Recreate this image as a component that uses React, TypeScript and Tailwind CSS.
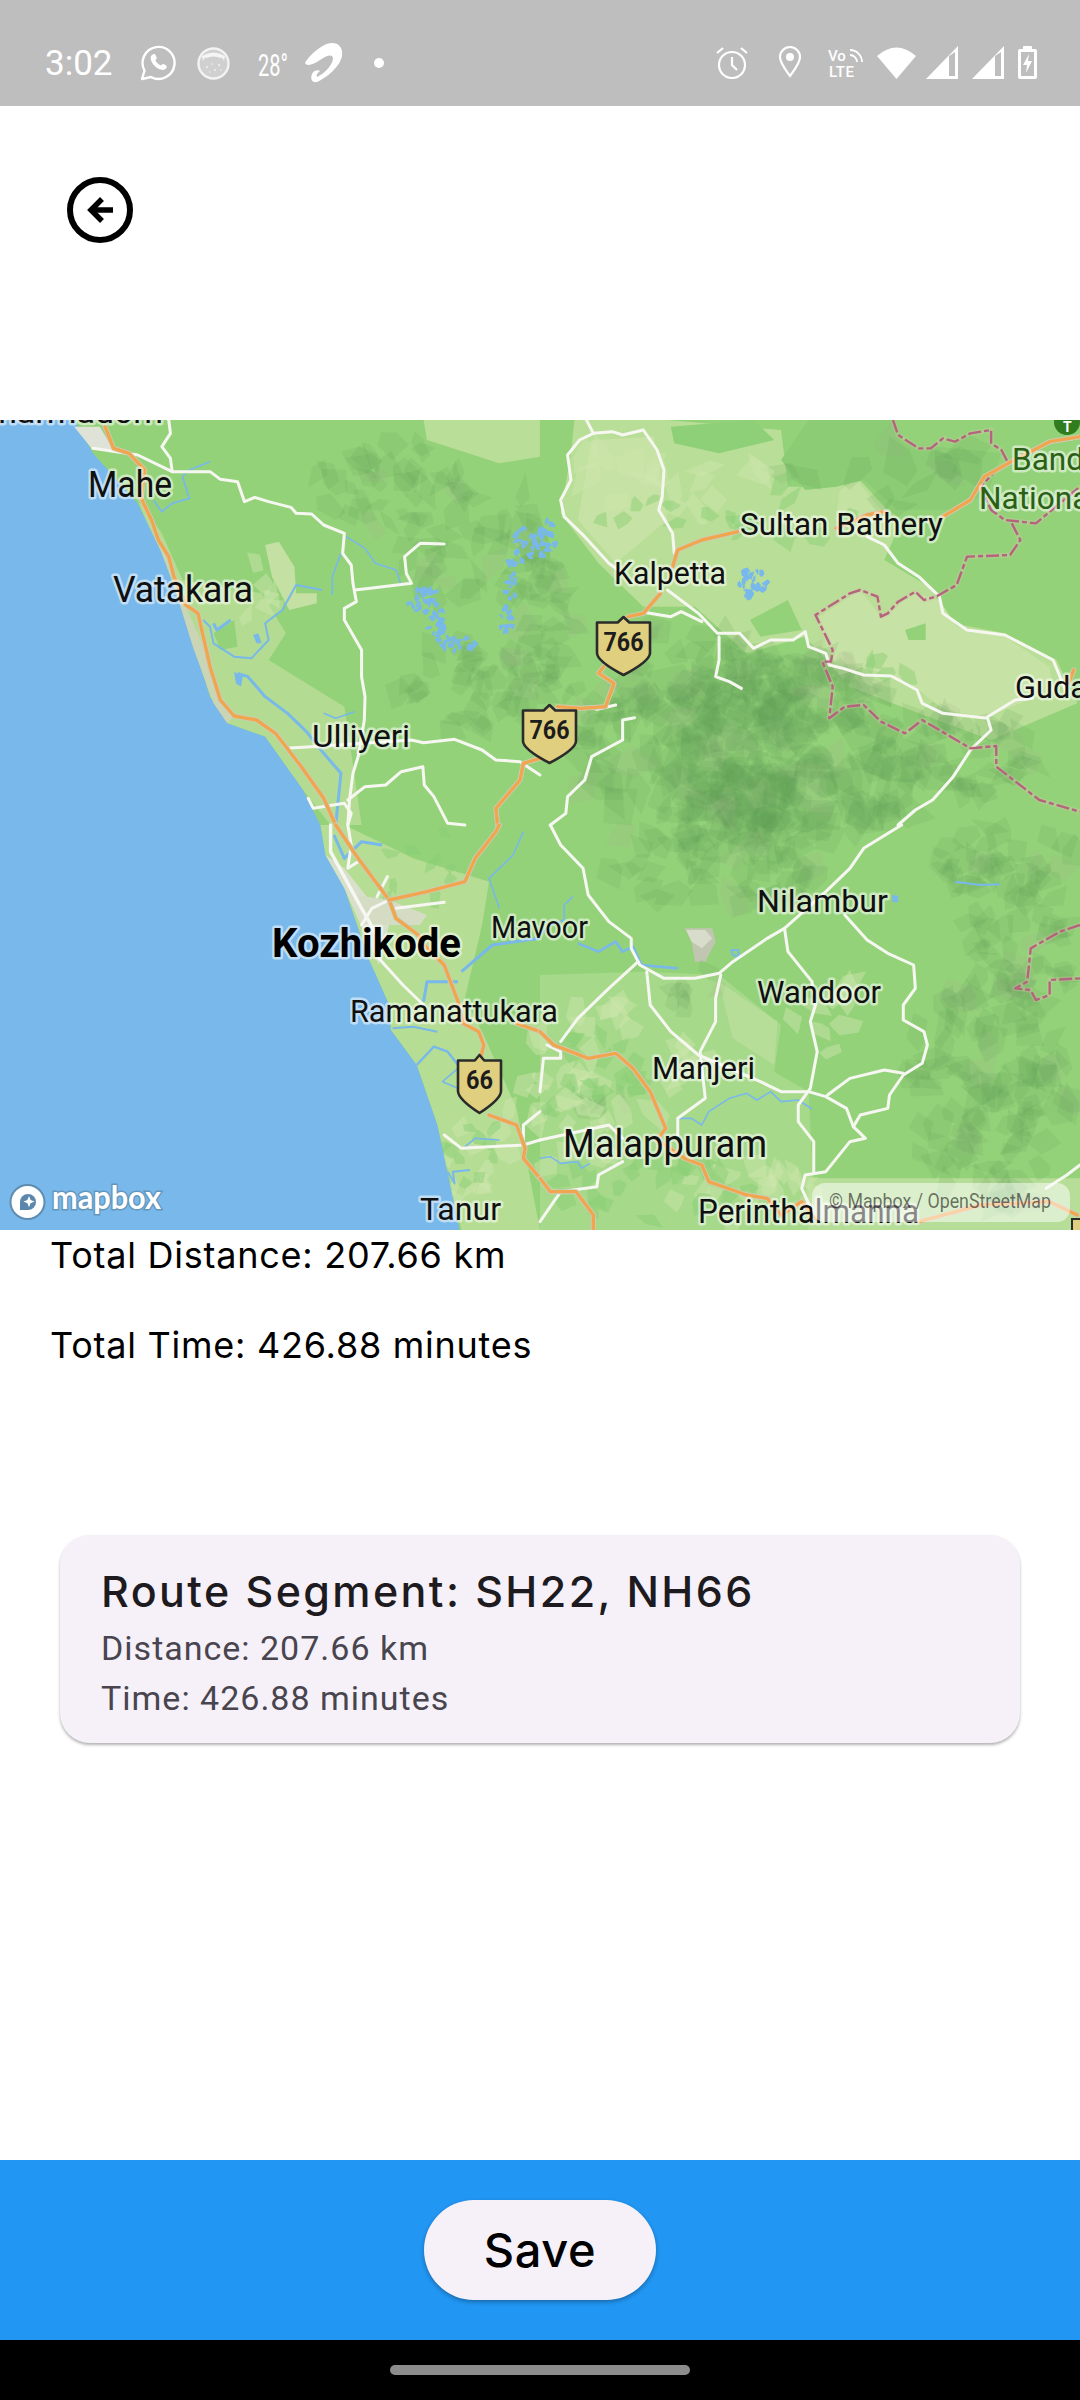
import React from "react";

const S = 1 / 2.904;
const T = 1 / 3;
const quad = (x: number, y: number) => `translate(${x} ${y}) scale(${S} ${T})`;

function scatter(seed: number, cx: number, cy: number, rx: number, ry: number, n: number, size: number) {
  let s = seed;
  const r = () => {
    s = (s * 16807) % 2147483647;
    return s / 2147483647;
  };
  const out: string[] = [];
  for (let i = 0; i < n; i++) {
    const a = r() * 6.283;
    const d = Math.sqrt(r());
    const x = cx + Math.cos(a) * d * rx;
    const y = cy + Math.sin(a) * d * ry;
    const p: string[] = [];
    const c = 4 + Math.floor(r() * 2);
    const tilt = r() * 6.283;
    const sq = 0.45 + r() * 0.45;
    for (let k = 0; k < c; k++) {
      const t = (k / c) * 6.283 + (r() - 0.5) * 0.7;
      const rad = (size / 2) * (0.6 + r() * 0.8);
      const ux = Math.cos(t) * rad;
      const uy = Math.sin(t) * rad * sq;
      p.push(`${(x + ux * Math.cos(tilt) - uy * Math.sin(tilt)).toFixed(1)},${(y + ux * Math.sin(tilt) + uy * Math.cos(tilt)).toFixed(1)}`);
    }
    out.push(p.join(" "));
  }
  return out;
}

const darkClusters: [number, number, number, number, number, number][] = [
  [396, 65, 80, 45, 34, 30],
  [470, 120, 70, 70, 40, 34],
  [465, 265, 70, 50, 38, 32],
  [540, 200, 40, 60, 30, 32],
  [575, 290, 50, 30, 18, 30],
  [753, 340, 190, 90, 170, 44],
  [753, 350, 90, 60, 60, 44],
  [690, 250, 80, 50, 44, 36],
  [800, 270, 90, 40, 44, 34],
  [955, 335, 90, 40, 44, 34],
  [715, 440, 110, 55, 60, 34],
  [988, 672, 85, 120, 100, 38],
  [1020, 520, 60, 60, 36, 34],
  [1005, 440, 70, 35, 34, 34],
  [884, 50, 110, 40, 14, 40],
  [690, 570, 40, 20, 8, 26],
  [600, 680, 30, 25, 8, 24],
];
const lightBlots: [number, number, number, number, number, number][] = [
  [620, 640, 90, 60, 24, 34],
  [560, 700, 70, 50, 20, 30],
  [760, 770, 90, 35, 22, 30],
  [460, 760, 30, 50, 12, 22],
  [820, 600, 40, 60, 10, 30],
  [660, 60, 110, 40, 16, 40],
  [250, 170, 25, 35, 6, 24],
];
const greenBlots: [number, number, number, number, number, number][] = [
  [640, 770, 110, 35, 22, 26],
  [590, 660, 60, 50, 18, 26],
  [470, 730, 30, 40, 10, 18],
  [420, 450, 40, 50, 10, 20],
  [800, 90, 70, 35, 8, 28],
  [640, 100, 50, 25, 6, 22],
  [880, 250, 40, 25, 4, 22],
  [720, 110, 25, 30, 4, 20],
];
const lakes: [number, number, number, number, number, number][] = [
  [424, 180, 16, 12, 26, 8],
  [440, 205, 12, 16, 24, 7],
  [458, 224, 18, 8, 20, 7],
  [506, 200, 6, 20, 16, 7],
  [512, 160, 7, 22, 16, 7],
  [525, 125, 12, 18, 18, 8],
  [545, 118, 12, 18, 22, 8],
  [753, 163, 14, 16, 28, 8],
];

function Road({ p, w = 3 }: { p: string; w?: number }) {
  return (
    <polyline points={p} fill="none" stroke="#f7f7f2" strokeWidth={w} strokeLinejoin="round" strokeLinecap="round" vectorEffect="non-scaling-stroke" />
  );
}
function Major({ p }: { p: string }) {
  return (
    <g fill="none" strokeLinejoin="round" strokeLinecap="round">
      <polyline points={p} stroke="#cfcdbb" strokeWidth={5} vectorEffect="non-scaling-stroke" />
      <polyline points={p} stroke="#f0a64e" strokeWidth={3.4} vectorEffect="non-scaling-stroke" />
    </g>
  );
}
function River({ p, w = 1.6 }: { p: string; w?: number }) {
  return <polyline points={p} fill="none" stroke="#78b8ea" strokeWidth={w} strokeLinejoin="round" vectorEffect="non-scaling-stroke" />;
}
function Border({ p }: { p: string }) {
  return (
    <g fill="none" strokeLinejoin="round">
      <polyline points={p} stroke="#d6c7a8" strokeOpacity={0.35} strokeWidth={5} vectorEffect="non-scaling-stroke" />
      <polyline points={p} stroke="#b5647e" strokeWidth={2.4} strokeDasharray="13 3 5 3" vectorEffect="non-scaling-stroke" />
    </g>
  );
}
function Label({ x, w, y, size, children, color = "#101010", bold = false }: { x: number; w: number; y: number; size: number; children: string; color?: string; bold?: boolean }) {
  return (
    <text
      x={x}
      y={y}
      textLength={w}
      lengthAdjust="spacingAndGlyphs"
      fontSize={size}
      fontWeight={bold ? 700 : 400}
      fill={color}
      stroke="#ffffff"
      strokeOpacity={0.55}
      strokeWidth={5}
      strokeLinejoin="round"
      paintOrder="stroke"
      fontFamily="Roboto, sans-serif"
    >
      {children}
    </text>
  );
}
function Shield({ x, y, w, h, t, tw }: { x: number; y: number; w: number; h: number; t: string; tw: number }) {
  const cx = x + w / 2;
  return (
    <g>
      <path
        d={`M${x} ${y + 0.095 * h} H${cx - 0.11 * w} L${cx} ${y} L${cx + 0.11 * w} ${y + 0.095 * h} H${x + w} V${y + 0.62 * h} Q${x + w} ${y + 0.76 * h} ${cx} ${y + h} Q${x} ${y + 0.76 * h} ${x} ${y + 0.62 * h} Z`}
        fill="#e0cf7f"
        stroke="#2b2b2b"
        strokeWidth={2.6}
        strokeLinejoin="round"
      />
      <text x={cx - tw / 2} y={y + 0.58 * h} textLength={tw} lengthAdjust="spacingAndGlyphs" fontSize={26} fontWeight={700} fill="#1c1c1c" fontFamily="Roboto, sans-serif">
        {t}
      </text>
    </g>
  );
}

function MapView() {
  return (
    <div className="h-[810px] w-full overflow-hidden">
      <svg width={1080} height={810} viewBox="0 0 1080 810" className="block">
        <g className="blur-[0.5px]">
          <rect x={-5} y={-5} width={1090} height={820} fill="#94d27a" />
          {/* light land */}
          <g transform={quad(540, 0)}>
            <polygon fill="#b9de97" points="100,0 370,0 700,30 720,200 860,200 920,170 1000,260 1050,300 1000,420 1130,500 1200,610 1350,640 1500,720 1560,850 1310,960 1100,880 900,800 770,650 600,700 450,560 300,560 170,430 60,280 90,100" />
            <polygon fill="#c6e2a4" points="810,590 930,510 990,590 1090,520 1160,540 1210,620 1350,650 1480,740 1490,810 1300,890 1170,870 1090,800 1000,760 840,720" />
            <polygon fill="#c6e2a4" points="150,60 330,50 370,300 220,430 110,300" />
            <polygon fill="#c4e2a2" points="870,210 920,180 990,270 930,340 860,300" />
            <polygon fill="#94d27a" points="1060,630 1120,610 1120,660 1070,660" />
            <polygon fill="#94d27a" points="610,600 720,540 760,630 640,650" />
            <polygon fill="#8ed077" points="380,20 620,0 680,60 520,100 390,70" />
            <polygon fill="#8ccc75" points="780,0 1030,0 1060,70 1340,100 1300,220 1200,270 1040,270 940,180 860,200 770,210 700,120" />
          </g>
          <g transform={quad(0, 0)}>
            <polygon fill="#b9de97" points="1230,0 1568,0 1568,110 1450,130 1240,60" />
            <polygon fill="#b3dc92" points="400,240 470,340 530,480 760,520 830,640 780,720 1000,860 1020,1000 1050,1215 960,1215 880,1110 770,950 660,910 610,830 530,570" />
            <polygon fill="#94d27a" points="620,640 680,600 690,680 640,690" />
            <polygon fill="#c4e0a2" points="770,375 810,365 855,440 860,520 920,520 920,550 840,570 790,470" />
          </g>
          <g transform={quad(0, 405)}>
            <polygon fill="#b5dd94" points="930,0 1000,0 1200,100 1420,170 1400,300 1350,520 1400,620 1500,850 1568,1215 1340,1215 1270,900 1210,720 1135,615 1130,540 1070,400 1000,190 945,90" />
          </g>
          <g transform={quad(540, 405)}>
            <polygon fill="#a7d98b" points="0,450 300,440 520,450 700,600 680,740 780,800 800,1215 0,1215" />
            <polygon fill="#b7de98" points="520,470 690,590 680,720 560,640" />
            <polygon fill="#b7de98" points="780,1060 1568,1060 1568,1215 780,1215" />
            <polygon fill="#c0c6b0" points="420,310 500,310 510,350 480,410 450,410 440,350" />
            <polygon fill="#d7dccb" points="425,315 480,315 500,340 470,370 440,350" />
          </g>
          {darkClusters.map((c, i) =>
            scatter(1000 + i * 77, c[0], c[1], c[2], c[3], c[4], c[5]).map((p, k) => (
              <polygon key={`${i}-${k}`} points={p} fill={k % 13 === 0 ? "#a6a98e" : "#5f9c55"} fillOpacity={0.14} />
            ))
          )}
          {lightBlots.map((c, i) =>
            scatter(3000 + i * 51, c[0], c[1], c[2], c[3], c[4], c[5]).map((p, k) => <polygon key={`l${i}-${k}`} points={p} fill="#cfe6ad" fillOpacity={0.45} />)
          )}
          {greenBlots.map((c, i) =>
            scatter(5000 + i * 91, c[0], c[1], c[2], c[3], c[4], c[5]).map((p, k) => <polygon key={`g${i}-${k}`} points={p} fill="#88cf74" fillOpacity={0.45} />)
          )}

          {/* sea */}
          <g transform={quad(0, 0)}>
            <polygon fill="#78b8ea" points="-20,-20 205,-20 270,100 400,250 470,400 530,570 610,830 660,910 770,950 880,1110 930,1215 -20,1215" />
            <polygon fill="#c9d5b4" points="400,250 440,320 500,480 560,680 620,850 660,910 680,890 640,840 600,700 540,560 490,420 450,340" />
            <polygon fill="#dfe2d6" points="215,20 290,20 330,90 270,90" />
          </g>
          <g transform={quad(0, 405)}>
            <polygon fill="#78b8ea" points="-20,0 930,0 945,90 1000,190 1030,280 1070,400 1130,540 1135,615 1210,720 1270,900 1340,1240 -20,1240" />
            <polygon fill="#d8dfcb" points="945,90 1000,130 1130,300 1100,420 1060,330 1000,190" />
            <polygon fill="#d4dcc4" points="1035,210 1130,225 1240,270 1220,300 1150,300 1080,300" />
          </g>

          {/* water */}
          {lakes.map((c, i) =>
            scatter(7000 + i * 33, c[0], c[1], c[2], c[3], c[4], c[5]).map((p, k) => <polygon key={`w${i}-${k}`} points={p} fill="#78b8ea" />)
          )}
          <g transform={quad(0, 0)}>
            <River p="1005,350 1060,385 1090,430 1150,450 1165,495" />
            <River p="990,400 965,470 965,525" />
            <River p="935,510 860,495 820,570 770,610 780,660 730,715 680,710 620,670 610,620 590,600" w={2} />
            <River p="530,170 550,235 500,250 470,275 445,240" w={1.8} />
            <River p="610,125 550,150 530,170" />
            <River p="670,600 630,630 620,610" w={3} />
            <River p="690,760 720,770 770,830 835,880 890,935 940,1000 990,1060 975,1215" w={3} />
            <River p="940,880 975,895 1030,875" />
            <polygon fill="#78b8ea" points="735,645 750,640 760,670 745,670" />
            <polygon fill="#78b8ea" points="680,755 705,770 700,800 685,790" />
          </g>
          <g transform={quad(0, 405)}>
            <River p="970,30 1000,100 1050,50 1110,60" w={3} />
            <River p="1520,20 1490,90 1420,160 1450,250" />
            <River p="1568,340 1430,360 1340,440" w={3} />
            <River p="1330,470 1240,470 1230,530" w={3} />
            <River p="1140,610 1200,605 1270,620" w={2} />
            <River p="1210,720 1260,665 1300,680 1330,720" w={2.4} />
            <River p="1330,730 1285,770 1330,790" />
            <River p="1345,970 1380,940 1450,945" />
            <River p="1300,1040 1320,1075 1315,1040 1365,1035" w={2} />
          </g>
          <g transform={quad(540, 405)}>
            <River p="95,215 70,240 70,285 30,300 0,330" />
            <River p="110,355 170,380 220,350 240,380 270,365 295,420 400,430" w={2.6} />
            <River p="405,880 440,880 470,900 490,860 550,820 600,805 630,825 670,800 700,830 750,825 790,852" />
            <River p="555,375 575,375 578,395 560,390 555,375" w={2} />
            <River p="1205,170 1280,180 1335,178" w={2} />
            <polygon fill="#78b8ea" points="1022,210 1040,212 1040,232 1024,232" />
            <River p="0,1000 30,995 60,1015 110,1010 120,1030 145,1015" />
          </g>

          {/* roads */}
          <g transform={quad(0, 0)}>
            <Road p="270,85 400,105 500,155 610,155 640,178 690,185 710,245 740,232 780,245 845,262 860,280 905,282 940,315 1000,340 995,400 1020,435 1025,490 1035,545 1000,565 1000,600 1050,690 1050,770 1060,830 1058,900 1040,1010 1025,1060 1015,1140 1010,1215" />
            <Road p="490,0 495,40 470,80 495,115 500,155" />
            <Road p="1030,510 1075,505 1195,490 1180,460 1175,410 1220,370 1290,372" />
            <Road p="830,985 905,980 1195,960 1230,968 1320,958 1400,990 1440,1020 1510,1025 1568,1065" />
            <Road p="1010,1140 1060,1100 1120,1095 1165,1055 1228,1040 1232,1095 1260,1130 1300,1210 1350,1215" />
            <Road p="895,1135 910,1165 1000,1150 1020,1180 1010,1215" />
            <Major p="305,20 330,85 375,100 420,150 410,235 440,300 460,360 490,410 505,470 540,555 575,580 610,740 640,840 680,888 745,900 800,940 875,1040 940,1135 975,1215" />
            <Major p="1568,1015 1520,1030 1510,1080 1440,1165 1445,1215" />
          </g>
          <g transform={quad(540, 0)}>
            <Road p="135,0 155,40 115,60 80,105 90,180 60,240 70,290 130,350 200,430 240,460" />
            <Road p="155,40 210,35 240,45 300,30 340,90 360,150 355,230 345,270 385,340 390,400" />
            <Road p="370,510 460,580 515,640 580,640 620,685 670,660 735,660 770,635 780,680 830,700 840,735 880,745 940,765 1020,768 1095,810 1110,850 1170,880 1300,895 1310,930 1250,990 1200,1070 1140,1140 1090,1170 1040,1215" />
            <Road p="310,578 380,590 410,575 470,605" />
            <Road p="520,650 520,720 510,770 550,785 585,805" />
            <Road p="950,350 1000,375 1040,430 1100,470 1160,530 1170,580 1240,630 1350,645 1490,720 1530,820" />
            <Road p="1300,890 1380,840 1430,835" />
            <Road p="275,893 240,900 240,960 150,1010 130,1080 80,1130 75,1180 30,1215" />
            <Road p="165,868 220,855" />
            <Border p="1025,0 1040,45 1100,85 1135,85 1170,55 1205,65 1250,40 1310,30 1310,70 1340,90 1360,130 1320,155 1280,200 1310,270 1350,300 1440,310 1568,200" />
            <Border p="1370,310 1395,360 1365,405 1240,410 1210,495 1150,530 1115,540 1090,515 1040,545 1010,580 990,590 980,530 930,510 900,520 800,585 850,690 845,725 820,725 850,800 840,895 885,860 940,855 990,905 1060,940 1110,900 1250,985 1325,978 1325,1040 1450,1140 1568,1175" />
            <Major p="575,335 470,360 400,390 385,440" />
            <Major p="350,520 300,580 255,590" />
            <Major p="185,740 170,760 215,790 190,860 120,865 50,860" />
            <Major p="860,325 950,285 1000,275" />
            <Major p="1170,290 1250,240 1290,170 1360,130 1480,65 1568,50" />
            <Major p="1550,750 1535,790" />
          </g>
          <g transform={quad(0, 405)}>
            <Road p="960,0 960,80 1050,250 1100,340" w={3.4} />
            <Road p="1130,225 1080,250 1050,300" />
            <Road p="1150,250 1290,232" />
            <Road p="1095,215 1125,155" />
            <Road p="1010,0 1020,60 1010,130 1040,110" />
            <Road p="1100,400 1170,480 1230,540" />
            <Road p="1290,930 1340,970 1520,960 1568,945" />
            <Road p="1520,960 1520,900 1568,860" />
            <Major p="975,0 1040,100 1130,225 1150,280 1215,330 1240,370 1290,420 1330,530 1345,595 1390,620 1405,660 1395,700" />
            <Major p="1130,225 1240,200 1350,170 1380,100 1440,20 1450,0" />
            <Major p="1420,870 1500,900 1525,970 1520,1000 1568,1060" />
            <Major p="1500,595 1568,620" />
          </g>
          <g transform={quad(540, 405)}>
            <Road p="30,0 60,60 125,130 140,210 200,290 265,340 265,370 290,420 360,460 450,460 520,445 560,410 660,340 710,310 830,200 900,130 940,70 1050,0" />
            <Road p="285,410 200,490 110,580 60,650" />
            <Road p="310,440 320,540 380,620 460,690 640,770 700,800 780,800 830,815 890,850 910,905 945,940 900,950 830,1040 770,1050 760,1090 800,1180" />
            <Road p="525,450 510,520 510,590 465,680 480,820 400,880 400,930" />
            <Road p="710,310 720,380 790,470 800,540 785,590 805,680 785,790 750,840 750,890 795,950 795,1040" />
            <Road p="885,270 950,345 1010,385 1085,420 1090,490 1055,540 1055,585 1115,620 1125,660 1110,715 1055,750 1015,810 1010,850 930,870 910,905" />
            <Road p="835,810 900,760 1000,735 1055,745" />
            <Road p="20,660 60,680 60,700 10,700 0,800" />
            <Road p="0,945 200,900 240,940" />
            <Road p="240,1010 170,1050 165,1085 60,1100 0,1190" />
            <Road p="1470,1090 1530,1050 1568,1020" />
            <Border p="1568,300 1510,320 1425,370 1415,470 1380,490 1425,495 1440,525 1480,510 1480,465 1568,460" />
            <Major p="0,620 40,660 140,700 220,685 270,730 320,800 365,910 340,945 420,1000 470,1020 490,1070 600,1110 660,1120 700,1170 760,1130 800,1180" />
            <Major p="1100,1190 1280,1140 1480,1130 1560,1170" />
            <Major p="0,1060 30,1100 105,1100 155,1170 155,1215" />
          </g>
        </g>

        {/* labels */}
        <Label x={-24} w={187} y={3} size={31}>Dharmadom</Label>
        <Label x={88} w={84} y={77} size={36}>Mahe</Label>
        <Label x={113} w={140} y={182} size={36}>Vatakara</Label>
        <Label x={312} w={98} y={327} size={32}>Ulliyeri</Label>
        <Label x={614} w={112} y={164} size={32}>Kalpetta</Label>
        <Label x={740} w={203} y={115} size={32}>Sultan Bathery</Label>
        <Label x={1012} w={72} y={50} size={32} color="#2b5f15">Band</Label>
        <Label x={979} w={118} y={89} size={32} color="#2b5f15">National</Label>
        <Label x={1015} w={72} y={278} size={32}>Guda</Label>
        <Label x={272} w={189} y={537} size={41} bold color="#000000">Kozhikode</Label>
        <Label x={491} w={97} y={518} size={32}>Mavoor</Label>
        <Label x={757} w={131} y={492} size={32}>Nilambur</Label>
        <Label x={757} w={124} y={583} size={32}>Wandoor</Label>
        <Label x={350} w={208} y={602} size={32}>Ramanattukara</Label>
        <Label x={652} w={103} y={659} size={32}>Manjeri</Label>
        <Label x={563} w={204} y={737} size={38}>Malappuram</Label>
        <Label x={420} w={81} y={800} size={32}>Tanur</Label>
        <Label x={698} w={221} y={803} size={34}>Perinthalmanna</Label>

        <Shield x={597} y={197} w={53} h={58} t="766" tw={40} />
        <Shield x={523} y={285} w={53} h={58} t="766" tw={40} />
        <Shield x={458} y={635} w={43} h={58} t="66" tw={27} />

        {/* park marker + corner shield */}
        <circle cx={1067} cy={2} r={13} fill="#2f7d1e" />
        <text x={1063} y={12} fontSize={14} fontWeight={700} fill="#ffffff" fontFamily="Roboto, sans-serif">T</text>
        <rect x={1072} y={799} width={14} height={16} fill="#e0cf7f" stroke="#2b2b2b" strokeWidth={2} />

        {/* mapbox logo */}
        <circle cx={27.5} cy={782} r={17} fill="#ffffff" stroke="#5f8db0" strokeWidth={2} />
        <path d="M20 790 V782 a8 8 0 1 1 8 8 Z" fill="#5a87ab" />
        <path d="M29 776 l1.6 4 4 1.6 -4 1.6 -1.6 4 -1.6 -4 -4 -1.6 4 -1.6 Z" fill="#ffffff" />
        <text x={52} y={789} textLength={109} lengthAdjust="spacingAndGlyphs" fontSize={33} fontWeight={700} fill="#ffffff" stroke="#5f8db0" strokeWidth={3} strokeOpacity={0.8} paintOrder="stroke" fontFamily="Lato, sans-serif">mapbox</text>

        {/* attribution pill */}
        <rect x={812} y={763} width={258} height={39} rx={13} fill="#ffffff" fillOpacity={0.5} />
        <text x={829} y={788} textLength={222} lengthAdjust="spacingAndGlyphs" fontSize={20} fill="#000000" fillOpacity={0.55} fontFamily="Roboto, sans-serif">© Mapbox / OpenStreetMap</text>
      </svg>
    </div>
  );
}

function StatusBar() {
  return (
    <div className="flex h-[106px] w-full shrink-0 items-start bg-[#bebebe] pt-[43px] text-white">
      <span className="ml-[45px] mt-[1px] w-[66px] text-[35px] leading-[40px] text-white" style={{ fontFamily: "Roboto, sans-serif" }}>3:02</span>
      {/* WhatsApp */}
      <svg className="ml-[29px] mt-[2px]" width={36} height={36} viewBox="0 0 36 36" fill="none">
        <path d="M2 34 L4.5 25.5 A16 16 0 1 1 11 32 Z" stroke="#fff" strokeWidth={2.4} strokeLinejoin="round" />
        <path d="M12.5 9.5 c1.5 -1 2.7 -0.5 3.2 0.8 l1 2.4 c0.3 0.8 -1 2 -1.4 2.6 c1 2.2 3 4.2 5.6 5.2 c0.7 -0.6 1.7 -1.8 2.5 -1.5 l2.5 1.2 c1 0.5 1 1.6 0.6 2.6 c-0.8 1.6 -3 2.5 -5 2 c-5 -1 -10 -6 -10.8 -10.8 c-0.3 -1.7 0.2 -3.4 1.8 -4.5 Z" fill="#fff" />
      </svg>
      {/* Round app icon */}
      <svg className="ml-[21px] mt-[4px]" width={33} height={33} viewBox="0 0 33 33">
        <circle cx={16.5} cy={16.5} r={15} fill="#d0d0d0" stroke="#f3f3f3" strokeWidth={2.4} />
        <path d="M5 9 Q16.5 2 28 9 L27 14 Q25 9 24 11 Q16.5 8 9 11 Q8 9 6 14 Z" fill="#f5f5f5" />
        <g fill="#f2f2f2">
          <circle cx={10} cy={20} r={1} />
          <circle cx={18} cy={23} r={1} />
          <circle cx={22} cy={18} r={1} />
          <circle cx={15} cy={17} r={0.8} />
          <circle cx={24} cy={23} r={0.8} />
          <circle cx={13} cy={25} r={0.8} />
        </g>
      </svg>
      {/* Temperature */}
      <svg className="ml-[28px] mt-[3px]" width={32} height={38} viewBox="0 0 32 38">
        <text x={0} y={30} textLength={30} lengthAdjust="spacingAndGlyphs" fontSize={31} fill="#fff" fontFamily="Roboto, sans-serif">28°</text>
      </svg>
      {/* Airtel */}
      <svg className="ml-[14px]" width={40} height={40} viewBox="0 0 40 40">
        <path d="M1 20 C4 14 18 0 28 0 C36 0 39 6 38 13 C36 24 22 35 13 39 C8 40 6 36 8 31 C9 28 14 26 16 28 C14 30 12 31 13 34 C20 31 29 22 29 15 C28 10 22 13 16 17 C10 21 3 24 1 20 Z" fill="#fff" />
      </svg>
      <span className="ml-[30px] mt-[15px] h-[10px] w-[10px] rounded-full bg-white" />

      <div className="ml-auto mt-[3px] flex items-start pr-[43px]">
        {/* Alarm */}
        <svg width={32} height={33} viewBox="0 0 32 33" fill="none" stroke="#fff" strokeWidth={2.2}>
          <circle cx={16} cy={19} r={13} />
          <path d="M16 11 V19 L21 24" />
          <path d="M1 7 L7 2 M31 7 L25 2" />
        </svg>
        {/* Location */}
        <svg className="ml-[30px]" width={24} height={32} viewBox="0 0 24 32" fill="none">
          <path d="M12 30 C7 23 2 17 2 11 A10 10 0 0 1 22 11 C22 17 17 23 12 30 Z" stroke="#fff" strokeWidth={2.2} strokeLinejoin="round" />
          <circle cx={12} cy={11} r={4} fill="#fff" />
        </svg>
        {/* VoLTE */}
        <svg className="ml-[26px] mt-[1px]" width={36} height={36} viewBox="0 0 36 36" fill="#fff">
          <text x={0} y={14} fontSize={15} fontWeight={500} fontFamily="Roboto, sans-serif">Vo</text>
          <text x={1} y={30} fontSize={15} fontWeight={500} letterSpacing={0.5} fontFamily="Roboto, sans-serif">LTE</text>
          <path d="M22 3 A12 12 0 0 1 34 15 M22 8 A7 7 0 0 1 29 15" fill="none" stroke="#fff" strokeWidth={1.8} />
        </svg>
        {/* Wifi */}
        <svg className="ml-[13px]" width={39} height={33} viewBox="0 0 39 33">
          <path d="M0 10 Q19.5 -7 39 10 L19.5 33 Z" fill="#fff" />
        </svg>
        {/* Signal 1 */}
        <svg className="ml-[10px]" width={32} height={33} viewBox="0 0 32 33">
          <path fillRule="evenodd" d="M0 33 L32 0 V33 Z M23 10 L23 30 L29 30 L29 6 Z" fill="#fff" />
        </svg>
        {/* Signal 2 */}
        <svg className="ml-[14px]" width={32} height={33} viewBox="0 0 32 33">
          <path fillRule="evenodd" d="M0 33 L32 0 V33 Z M23 10 L23 30 L29 30 L29 6 Z" fill="#fff" />
        </svg>
        {/* Battery */}
        <svg className="ml-[14px]" width={19} height={33} viewBox="0 0 19 33">
          <path fillRule="evenodd" d="M5 3 V1 Q5 0 6 0 H13 Q14 0 14 1 V3 H17 Q19 3 19 5 V31 Q19 33 17 33 H2 Q0 33 0 31 V5 Q0 3 2 3 Z M3 6 V30 H16 V6 Z" fill="#fff" />
          <path d="M11 8 L5 19 H9 L8 27 L14 15 H10 Z" fill="#fff" />
        </svg>
      </div>
    </div>
  );
}

export default function App() {
  return (
    <div className="flex h-[2400px] w-[1080px] flex-col overflow-hidden bg-white">
      <StatusBar />
      <div className="h-[314px] shrink-0 pl-[67px] pt-[71px]">
        <svg width={66} height={66} viewBox="0 0 66 66" fill="none" stroke="#000">
          <circle cx={33} cy={33} r={30} strokeWidth={6} />
          <path d="M46 33 H24" strokeWidth={5.5} />
          <path d="M35 22 L24 33 L35 44" strokeWidth={5.5} />
        </svg>
      </div>
      <MapView />
      <div className="flex shrink-0 flex-col gap-[40px] pl-[50px] text-[36px] leading-[50px] text-black" style={{ fontFamily: "Inter, sans-serif" }}>
        <p className="tracking-[0.75px]">Total Distance: 207.66 km</p>
        <p className="tracking-[0.75px]">Total Time: 426.88 minutes</p>
      </div>
      <div className="ml-[60px] mt-[165px] h-[208px] w-[960px] shrink-0 rounded-[30px] bg-[#f6f1f9] pl-[41px] pt-[30px] shadow-[0_2px_3px_rgba(0,0,0,0.3)]">
        <p className="text-[43px] font-medium leading-[52px] tracking-[2.4px] text-[#1d1b20]" style={{ fontFamily: "Inter, sans-serif" }}>Route Segment: SH22, NH66</p>
        <p className="mt-[6px] text-[34px] leading-[50px] tracking-[1px] text-[#49454f]" style={{ fontFamily: "Roboto, sans-serif" }}>Distance: 207.66 km</p>
        <p className="text-[34px] leading-[50px] tracking-[1px] text-[#49454f]" style={{ fontFamily: "Roboto, sans-serif" }}>Time: 426.88 minutes</p>
      </div>
      <div className="flex-1" />
      <div className="flex h-[180px] shrink-0 items-center justify-center bg-[#2196f3]">
        <button className="flex h-[100px] w-[232px] items-center justify-center rounded-full bg-[#f6f1f9] text-[47px] font-medium tracking-[0.6px] text-black shadow-[0_2px_4px_rgba(0,0,0,0.3)]" style={{ fontFamily: "Inter, sans-serif" }}>
          Save
        </button>
      </div>
      <div className="flex h-[60px] shrink-0 items-start justify-center bg-black pt-[25px]">
        <div className="h-[10px] w-[300px] rounded-full bg-[#8c8c8c]" />
      </div>
    </div>
  );
}
